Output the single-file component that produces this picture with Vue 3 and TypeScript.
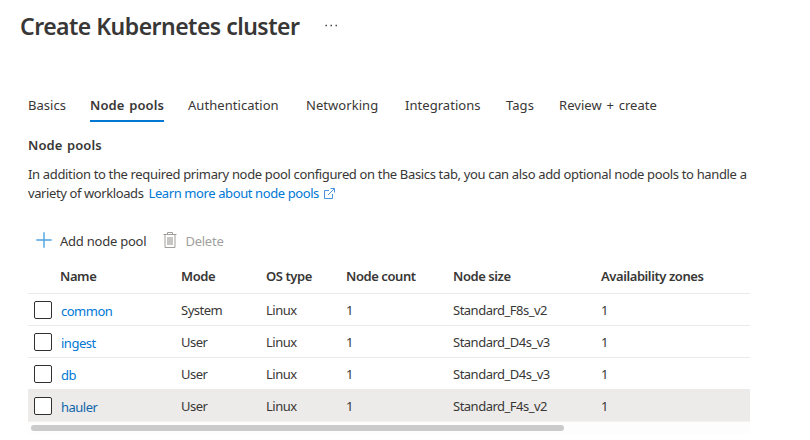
<script setup lang="ts">
interface Tab {
  label: string
  active?: boolean
}

interface NodePool {
  name: string
  mode: string
  os: string
  count: number
  size: string
  zones: string
  highlighted?: boolean
}

const tabs: Tab[] = [
  { label: 'Basics' },
  { label: 'Node pools', active: true },
  { label: 'Authentication' },
  { label: 'Networking' },
  { label: 'Integrations' },
  { label: 'Tags' },
  { label: 'Review + create' },
]

const columns: string[] = ['Name', 'Mode', 'OS type', 'Node count', 'Node size', 'Availability zones']

const pools: NodePool[] = [
  { name: 'common', mode: 'System', os: 'Linux', count: 1, size: 'Standard_F8s_v2', zones: '1' },
  { name: 'ingest', mode: 'User', os: 'Linux', count: 1, size: 'Standard_D4s_v3', zones: '1' },
  { name: 'db', mode: 'User', os: 'Linux', count: 1, size: 'Standard_D4s_v3', zones: '1' },
  { name: 'hauler', mode: 'User', os: 'Linux', count: 1, size: 'Standard_F4s_v2', zones: '1', highlighted: true },
]
</script>

<template>
  <main class="page">
    <header class="title-bar">
      <h1 class="title">Create Kubernetes cluster</h1>
      <svg class="more" width="13" height="3" viewBox="0 0 13 3">
        <path d="M0.5 .7h1.5v1.5H.5zM5.5 .7H7v1.5H5.5zM10.5 .7H12v1.5h-1.5z" fill="#444" />
      </svg>
    </header>

    <nav class="tabs">
      <div v-for="tab in tabs" :key="tab.label" class="tab-cell">
        <span class="tab" :class="{ active: tab.active }">{{ tab.label }}</span>
      </div>
    </nav>

    <section class="content">
      <h2 class="heading">Node pools</h2>
      <p class="description">
        <span class="line first">In addition to the required primary node pool configured on the Basics tab, you can also add optional node pools to handle a</span>
        <span class="line second">
          <span class="tail">variety of workloads</span>
          <a class="link">Learn more about node pools</a>
          <svg class="external" width="11" height="11" viewBox="0 0 11 11" fill="none" stroke="#4f93dd" stroke-width="1">
            <path d="M5 2.5H.5v8h8V6M6.5.5h4v4M10.3.7 4 7" />
          </svg>
        </span>
      </p>

      <div class="toolbar">
        <div class="command">
          <svg width="16" height="16" viewBox="0 0 16 16" stroke="#4fa3e3" stroke-width="1.4">
            <path d="M8 .3v15.4M.3 8h15.4" />
          </svg>
          <span class="add-label">Add node pool</span>
        </div>
        <div class="command disabled">
          <svg width="14" height="17" viewBox="0 0 14 17" fill="none" stroke="#a19f9d">
            <path d="M.5 2.5h13M4.5 2.5v-2h5v2M2 2.8v12.7h10V2.8" />
            <path d="M4 5h6v8H4z" fill="#c8c6c4" stroke="none" />
          </svg>
          <span class="delete-label">Delete</span>
        </div>
      </div>

      <div class="table">
        <div class="row head">
          <span></span>
          <span v-for="column in columns" :key="column">{{ column }}</span>
        </div>
        <div v-for="pool in pools" :key="pool.name" class="row" :class="{ highlighted: pool.highlighted }">
          <span class="checkbox"></span>
          <a class="link name">{{ pool.name }}</a>
          <span class="cell">{{ pool.mode }}</span>
          <span class="cell">{{ pool.os }}</span>
          <span class="cell">{{ pool.count }}</span>
          <span class="cell">{{ pool.size }}</span>
          <span class="cell">{{ pool.zones }}</span>
        </div>
        <div class="scroll-track"><div class="scroll-thumb"></div></div>
      </div>
    </section>
  </main>
</template>

<style>
body {
  background: #fff;
}
</style>

<style scoped>
.page {
  box-sizing: border-box;
  width: 810px;
  height: 440px;
  overflow: hidden;
  background: #fff;
  color: #383736;
  font-family: "Noto Sans", "Open Sans", sans-serif;
  font-size: 13px;
  line-height: 19px;
  letter-spacing: -0.345px;
  white-space: nowrap;
}

.title-bar {
  display: flex;
  align-items: center;
  height: 51px;
  padding-left: 20px;
}

.title {
  width: 305px;
  margin: 0;
  font-size: 23px;
  font-weight: 600;
  line-height: 32px;
  letter-spacing: -0.52px;
}

.more {
  display: block;
}

.tabs {
  display: grid;
  grid-template-columns: 62px 98px 118px 99px 101px 53px auto;
  margin-top: 44px;
  padding-left: 28px;
  font-size: 13px;
  letter-spacing: 0.05px;
  word-spacing: 1.3px;
}

.tab {
  display: inline-block;
  height: 25px;
  border-bottom: 2px solid transparent;
  line-height: 21px;
}

.tab.active {
  border-bottom-color: #0078d4;
  font-weight: 600;
  letter-spacing: 0.1px;
}

.content {
  width: 722px;
  padding-left: 28px;
}

.heading {
  margin: 13px 0 0;
  font-size: 13px;
  font-weight: 600;
  line-height: 20px;
  letter-spacing: 0.1px;
  word-spacing: 1px;
}

.description {
  margin: 10px 0 0;
}

.line {
  display: flex;
  height: 19px;
}

.link {
  color: #0078d4;
}

.second {
  letter-spacing: -0.4px;
}

.second .link {
  margin-left: 5px;
}

.external {
  margin: 4px 0 0 5px;
}

.toolbar {
  display: flex;
  align-items: center;
  gap: 17px;
  height: 34px;
  margin-top: 20px;
  padding-left: 8px;
}

.command {
  display: flex;
  align-items: center;
  gap: 8px;
  letter-spacing: -0.23px;
}

.command span {
  padding-top: 2px;
}

.disabled {
  color: #a19f9d;
}

.row {
  box-sizing: border-box;
  display: grid;
  grid-template-columns: 32px 121px 85px 80px 107px 148px 149px;
  align-items: center;
  height: 32px;
  border-bottom: 1px solid #edebe9;
  letter-spacing: -0.5px;
}

.row.head {
  height: 37px;
  padding-top: 2px;
  font-weight: 600;
  letter-spacing: -0.42px;
}

.highlighted {
  border-bottom-color: #f3f2f1;
  background: #edebe9;
}

.checkbox {
  box-sizing: border-box;
  width: 18px;
  height: 18px;
  margin-left: 6px;
  border: 1px solid #323130;
  border-radius: 2px;
  background: #fff;
}

.cell {
  padding-top: 2px;
}

.name {
  padding: 4px 0 0 1px;
}

.highlighted .name {
  color: #1065ab;
}

.scroll-track {
  height: 9px;
  padding: 3px 3px 0;
  background: #fdfdfd;
}

.scroll-thumb {
  width: 533px;
  height: 6px;
  border-radius: 3px;
  background: #cbcbcb;
}
</style>
